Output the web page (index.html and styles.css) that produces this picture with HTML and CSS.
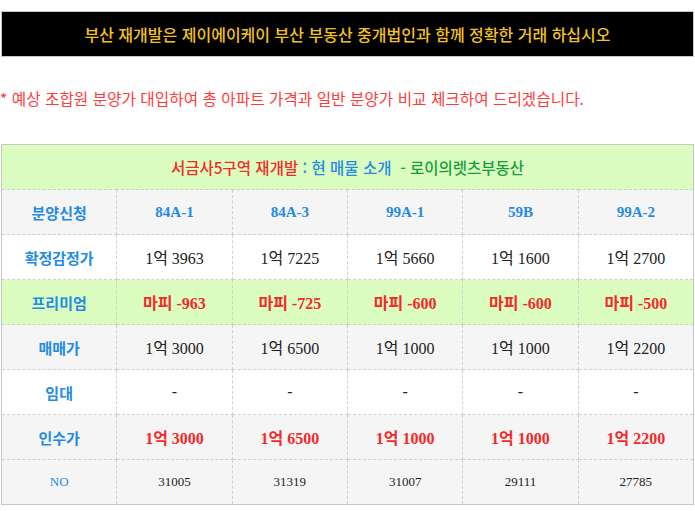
FILE: index.html
```html
<!DOCTYPE html>
<html lang="ko">
<head>
<meta charset="utf-8">
<link rel="stylesheet" href="styles.css">
</head>
<body>
<div class="page">
  <div class="banner">부산 재개발은 제이에이케이 부산 부동산 중개법인과 함께 정확한 거래 하십시오</div>
  <p class="notice">* 예상 조합원 분양가 대입하여 총 아파트 가격과 일반 분양가 비교 체크하여 드리겠습니다.</p>
  <table class="listing">
    <tr class="title-row">
      <td colspan="6"><span class="t-red">서금사5구역 재개발</span><span class="t-blue"> : 현 매물 소개</span><span class="t-green">&nbsp; - 로이의렛츠부동산</span></td>
    </tr>
    <tr class="gray head">
      <th>분양신청</th><td>84A-1</td><td>84A-3</td><td>99A-1</td><td>59B</td><td>99A-2</td>
    </tr>
    <tr class="white">
      <th>확정감정가</th><td>1억 3963</td><td>1억 7225</td><td>1억 5660</td><td>1억 1600</td><td>1억 2700</td>
    </tr>
    <tr class="green red">
      <th>프리미엄</th><td>마피 -963</td><td>마피 -725</td><td>마피 -600</td><td>마피 -600</td><td>마피 -500</td>
    </tr>
    <tr class="gray">
      <th>매매가</th><td>1억 3000</td><td>1억 6500</td><td>1억 1000</td><td>1억 1000</td><td>1억 2200</td>
    </tr>
    <tr class="white">
      <th>임대</th><td>-</td><td>-</td><td>-</td><td>-</td><td>-</td>
    </tr>
    <tr class="gray red">
      <th>인수가</th><td>1억 3000</td><td>1억 6500</td><td>1억 1000</td><td>1억 1000</td><td>1억 2200</td>
    </tr>
    <tr class="gray small">
      <th>NO</th><td>31005</td><td>31319</td><td>31007</td><td>29111</td><td>27785</td>
    </tr>
  </table>
</div>
</body>
</html>
```
FILE: styles.css
```css
html, body {
  margin: 0;
  padding: 0;
  background: #fff;
}
.page {
  padding: 11px 1px 0 1px;
  font-family: "Noto Sans CJK KR", "Noto Sans", sans-serif;
}
.banner {
  height: 44px;
  border: 1px solid #c8c8c8;
  background: #000;
  color: #f4c21c;
  font-size: 16px;
  font-weight: 500;
  letter-spacing: 0;
  display: flex;
  align-items: center;
  justify-content: center;
}
.notice {
  margin: 31px 0 0 -1px;
  height: 22px;
  line-height: 22px;
  color: #ff3b3b;
  font-size: 15.7px;
  letter-spacing: 0;
}
.listing {
  margin-top: 34px;
  width: 693px;
  border-collapse: collapse;
  table-layout: fixed;
  border: 1px solid #c8c8c8;
  font-family: "Liberation Serif", "Noto Sans CJK KR", serif;
}
.listing td, .listing th {
  height: 44px;
  padding: 0;
  text-align: center;
  border: 1px dashed #cfcfcf;
  font-size: 16px;
  font-weight: 400;
  color: #222;
}
.listing th {
  color: #238be6;
  font-family: "Noto Sans CJK KR", sans-serif;
  font-weight: 700;
  font-size: 15px;
}
.title-row td {
  background: #dbfdc0;
  font-family: "Noto Sans CJK KR", sans-serif;
  font-size: 15.5px;
  font-weight: 500;
  border-bottom: 1px dashed #cfcfcf;
}
.t-red { color: #f42a2a; }
.t-blue { color: #238be6; }
.t-green { color: #16a03b; }
.gray td, .gray th { background: #f5f5f5; }
.white td, .white th { background: #fff; }
.green td, .green th { background: #dbfdc0; }
.head td {
  color: #238be6;
  font-size: 15px;
  font-weight: 700;
}
.red td {
  color: #f42a2a;
  font-weight: 700;
}
.small td { font-size: 13px; }
.small th {
  font-family: "Liberation Serif", serif;
  font-size: 13px;
  font-weight: 400;
}
```
